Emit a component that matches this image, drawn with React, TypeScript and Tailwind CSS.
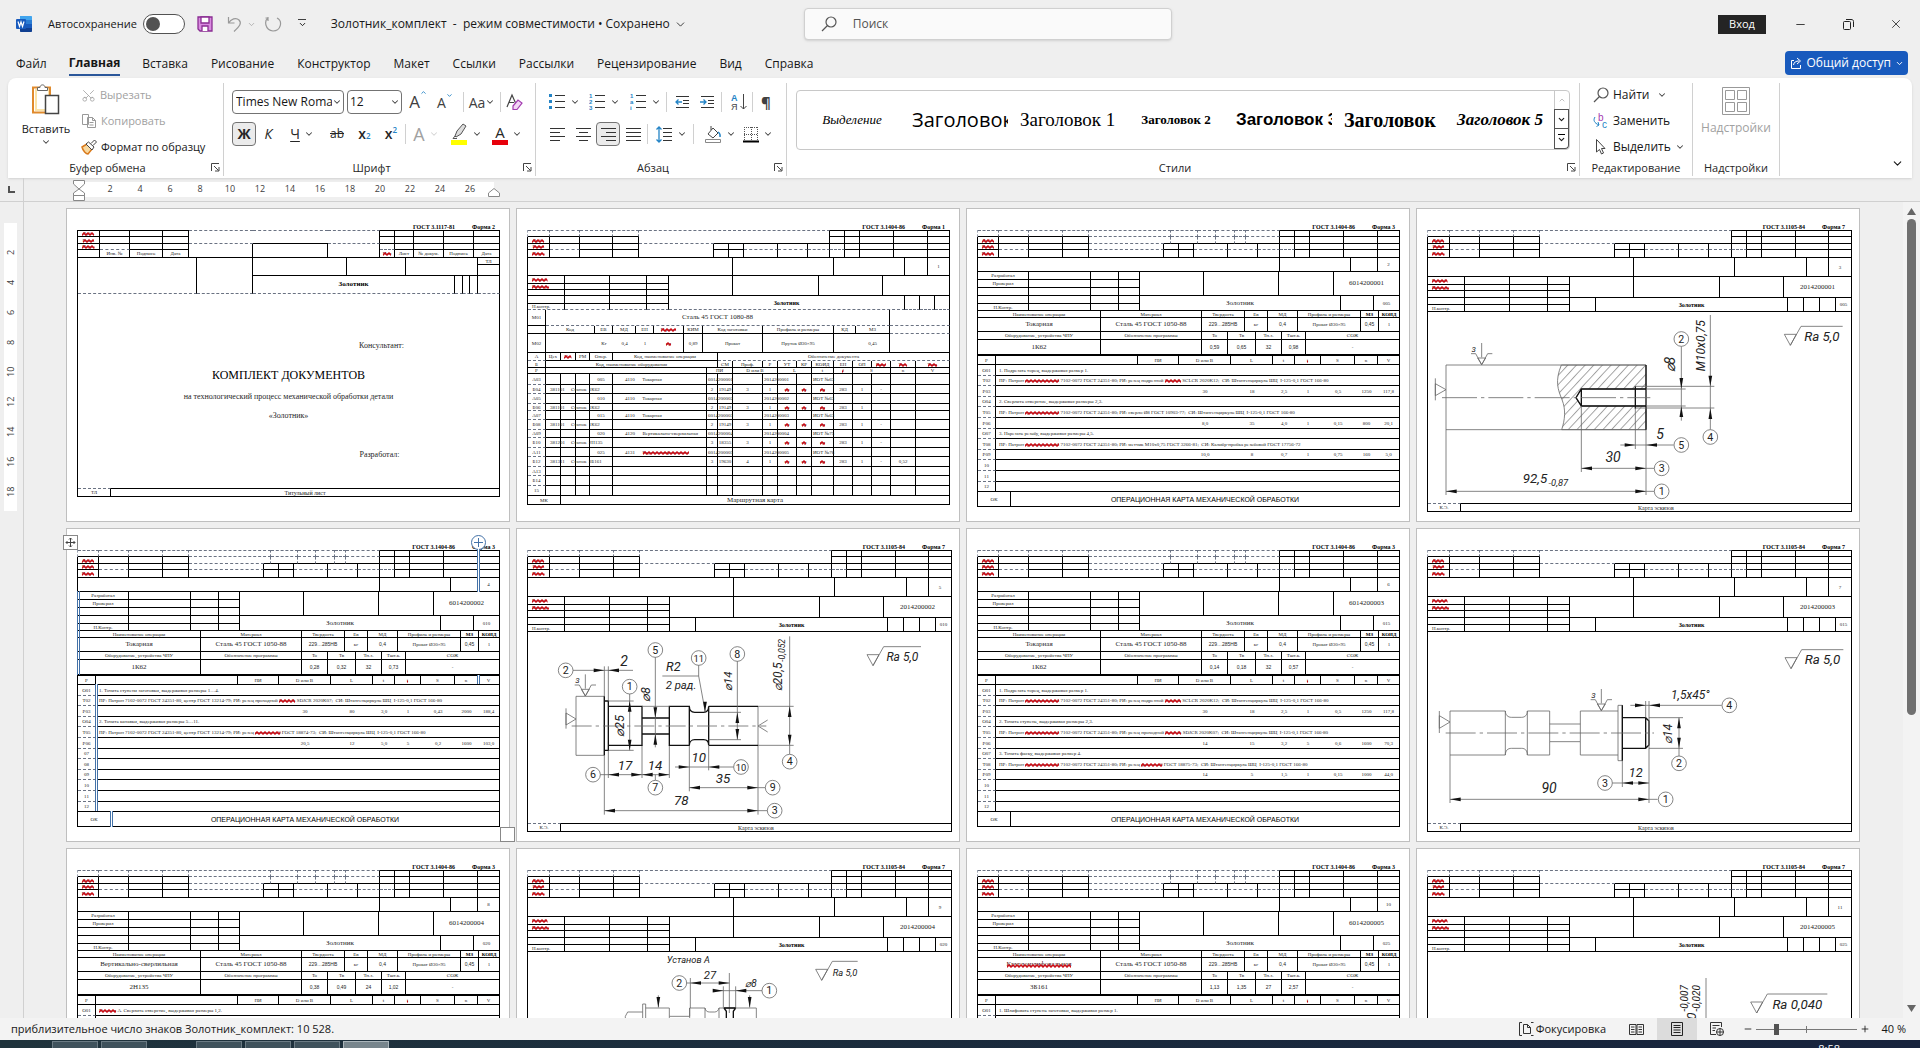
import React from 'react';
import { twMerge } from 'tailwind-merge';
import { ChevronDown, ChevronUp, Scissors, Minus, Plus, X } from 'lucide-react';

/* ---------- document forms ---------- */

interface Cell {
  to: number;
  text?: React.ReactNode;
  cls?: string;
}

interface Row {
  h: number;
  cells: Cell[];
}

const DR = '[border-right-style:dashed] border-r-gray-500';
const DB = '[border-bottom-style:dashed] border-b-gray-500';
const DT = 'border-t [border-top-style:dashed] border-t-gray-500';
const NR = 'border-r-0';
const NB = 'border-b-0';
const LEFT = 'text-left pl-1';
const BIG = 'text-[7px]';
const BOLD = 'font-bold text-black';
const SANS = 'font-[Liberation_Sans,sans-serif]';

const c = (to: number, text?: React.ReactNode, cls?: string): Cell => ({ to, text, cls });
const blank = (edges: number[], cls?: string): Cell[] => edges.map((e) => c(e, undefined, cls));
const row = (h: number, ...cells: Cell[]): Row => ({ h, cells });

// Spelling squiggles share one pattern, which App puts in the page
const Squiggle = () => (
  <svg className="absolute size-0" aria-hidden="true">
    <defs>
      <pattern id="squiggle" width="4" height="4" patternUnits="userSpaceOnUse">
        <path d="M-1 4L2 1L5 4" fill="none" stroke="#cc0a14" strokeWidth="1.500" />
      </pattern>
    </defs>
  </svg>
);

const Red = ({ children }: { children: React.ReactNode }) => (
  <span className="relative inline-block text-red-950">
    {children}
    <svg className="absolute bottom-0 left-0 h-1 w-full" aria-hidden="true"><rect width="100%" height="4" fill="url(#squiggle)" /></svg>
  </span>
);

// Column edges are tab stops measured from the left frame line of the form
const Strip = ({ from = 0, rows }: { from?: number; rows: Row[] }) => {
  const widths = rows[0].cells.map((cell, i) => cell.to - (i ? rows[0].cells[i - 1].to : from));
  const total = widths.reduce((a, b) => a + b, 0);
  return (
    <table className="table-fixed border-separate border-spacing-0 font-[Liberation_Serif,serif] text-[5px] leading-none text-neutral-800" style={{ width: total }}>
      <colgroup>
        {widths.map((w, i) => <col key={i} style={{ width: w }} />)}
      </colgroup>
      <tbody>
        {rows.map((r, i) => (
          <tr key={i} style={{ height: r.h }}>
            {r.cells.map((cell, j) => (
              <td key={j} className={twMerge('border-r border-b border-black p-0 text-center align-middle leading-none whitespace-pre', cell.cls)}>
                {cell.text}
              </td>
            ))}
          </tr>
        ))}
      </tbody>
    </table>
  );
};

const Sheet = ({ gost, form, children }: { gost: string; form: string; children: React.ReactNode }) => (
  <section className="relative h-[314px] w-[444px] shrink-0 border border-[#bfbfbf] bg-white px-[10px]">
    <div className="flex h-[21px] items-end justify-end gap-[17px] pr-1 font-[Liberation_Serif,serif] text-[6px] leading-[6px] font-bold text-black">
      <span>{gost}</span>
      <span>{form}</span>
    </div>
    {children}
  </section>
);

const Frame = ({ children }: { children: React.ReactNode }) => (
  <div className="w-fit border-l border-black">{children}</div>
);

// The stamp on top of every form but the title one
const StampTop = ({ left, mid, right, dashes }: { left: number[]; mid: number[]; right: number[]; dashes?: number[] }) => {
  const [l0, l1, l2, l3] = left;
  return (
    <>
      <div className="w-fit border-l border-dashed border-gray-400">
        <Strip
          rows={[
            row(
              7,
              ...blank(left, `${DT} ${DR}`),
              ...blank(dashes || [], `${DT} ${DR} ${DB}`),
              c(right[0], '', `${DT} ${dashes ? DB : NB}`),
              ...blank(right.slice(1), 'border-t border-t-black'),
            ),
          ]}
        />
      </div>
      <Frame>
        <Strip
          rows={[
            row(
              7,
              c(l0, <Red>Дубл.</Red>), c(l1), c(l2), c(l3),
              c(mid[0], '', `${DB} ${NR}`),
              ...blank(dashes || [], DR),
              c(right[0]),
              ...blank(right.slice(1)),
            ),
          ]}
        />
        <Strip
          rows={[
            row(
              6,
              c(l0, <Red>Взам.</Red>), c(l1, '', DB), c(l2), c(l3),
              c(mid[0], '', dashes ? DB : NB), c(mid[1]), c(mid[2]), c(mid[3], '', DB), c(mid[4], '', DB),
              c(right[0], '', DB), c(right[1], '', DB), ...blank(right.slice(2)),
            ),
            row(8, c(l0, <Red>Подп.</Red>), ...blank([l1, l2, l3, ...mid, ...right])),
          ]}
        />
      </Frame>
    </>
  );
};

const Title = () => {
  const r = [317, 336, 366, 396, 422];
  const top = 'border-t border-t-black';
  return (
    <Sheet gost="ГОСТ 3.1117-81" form="Форма 2">
      <Frame>
        <Strip
          rows={[
            row(7, c(22, <Red>Дубл.</Red>, top), ...blank([52, 85, 111], top), ...blank([175, 250], `${DT} ${NR} ${NB}`), c(302, '', `${DT} ${NB}`), ...blank(r, top)),
            row(7, c(22, <Red>Взам.</Red>), ...blank([52, 85, 111]), c(175, '', `${DB} ${NR}`), c(250, '', NR), c(302, '', DB), ...blank(r)),
            row(6, c(22, <Red>Подп.</Red>), c(52, '', DB), c(85), c(111), ...blank([175, 250, 302], NB), c(317, '', DB), ...blank(r.slice(1))),
            row(8, c(22), c(52, 'Инв. №'), c(85, 'Подпись'), c(111, 'Дата'), c(175), c(250), c(302), c(317, <Red>Изм</Red>), c(336, 'Лист'), c(366, '№ докум.'), c(396, 'Подпись'), c(422, 'Дата')),
          ]}
        />
        <div className="flex">
          <Strip rows={[row(36, c(119, '', DB), c(175, '', DB))]} />
          <div>
            <div className="flex">
              <Strip from={175} rows={[row(18, c(269), c(328), c(400))]} />
              <Strip from={400} rows={[row(7, c(422, 'ТЛ')), row(11, c(422))]} />
            </div>
            <Strip from={175} rows={[row(18, c(377, 'Золотник', `${BOLD} ${BIG} ${DB}`), ...blank([385, 392, 400, 422], DB))]} />
          </div>
        </div>
        <div className="flex h-[194px] flex-col items-center border-r border-black pt-12 font-[Liberation_Serif,serif] text-[8px] leading-none text-neutral-800">
          <p className="pl-[186px]">Консультант:</p>
          <h2 className="mt-[19px] text-[12px] text-black">КОМПЛЕКТ ДОКУМЕНТОВ</h2>
          <p className="mt-3">на технологический процесс механической обработки детали</p>
          <p className="mt-[11px]">«Золотник»</p>
          <p className="mt-[31px] pl-[182px]">Разработал:</p>
        </div>
        <Strip rows={[row(9, c(33, 'ТЛ', DT), c(422, 'Титульный лист', 'border-t border-t-black text-[6px]'))]} />
      </Frame>
    </Sheet>
  );
};

const WIDE_COLS = [18, 33, 48, 62, 85, 179, 190, 205, 235, 250, 269, 284, 306, 325, 344, 363, 388, 422];

const routeA = (h: number, label: string, no: string, code: string, name: React.ReactNode, doc: string, sketch: string, iot: string): Row => {
  const text: Record<number, React.ReactNode> = { 85: no, 179: <>{code}      {name}</>, 190: doc, 250: sketch, 306: iot };
  return row(h, c(18, label, DB), ...WIDE_COLS.slice(1).map((e) => c(e, text[e], e === 179 ? 'text-left pl-3' : e > 179 ? 'text-left pl-px' : '')));
};

const routeB = (h: number, label: string, code: string, machine: string, vals: React.ReactNode[]): Row =>
  row(
    h, c(18, label, DB), c(33, code, LEFT), c(48, machine, 'text-left pl-[10px]'), ...blank([62, 85, 179]),
    ...WIDE_COLS.slice(6).map((e, i) => c(e, vals[i])),
  );

const kr = <Red>кр</Red>;

const RouteCard = () => (
  <Sheet gost="ГОСТ 3.1404-86" form="Форма 1">
    <StampTop left={[22, 52, 85, 111]} mid={[186, 201, 216, 250, 280]} right={[302, 317, 332, 366, 400, 422]} />
    <Frame>
      <Strip rows={[row(18, c(205), c(306), c(377), c(400), c(422, '1'))]} />
      <div className="flex">
        <Strip
          rows={[
            row(8, c(37, <Red>Разраб.</Red>, LEFT), ...blank([82, 119, 141])),
            row(6, c(37, <Red>Провер.</Red>, LEFT), ...blank([82, 119, 141])),
            row(6, ...blank([37, 82, 119, 141])),
            row(8, ...blank([37, 82, 119, 141])),
            row(6, c(37, 'Н.контр.', `${LEFT} ${DB}`), ...blank([82, 119, 141], DB)),
          ]}
        />
        <div>
          <Strip from={141} rows={[row(20, ...blank([205, 291, 355, 422]))]} />
          <Strip from={141} rows={[row(14, c(377, 'Золотник', `${BOLD} text-[6px] ${DB}`), ...blank([392, 407, 422], DB))]} />
        </div>
      </div>
      <Strip rows={[row(16, c(18, 'М01'), c(362, 'Сталь 45 ГОСТ 1080-88', `${BIG} ${DB}`), c(422, '', DB))]} />
      <Strip rows={[row(8, c(18), c(67, 'Код'), c(85, 'ЕВ'), c(108, 'МД'), c(126, 'ЕН'), c(156, <Red>Н.расх.</Red>), c(175, 'КИМ'), c(235, 'Код заготовки'), c(306, 'Профиль и размеры'), c(328, 'КД'), c(362, 'МЗ'), c(422, '', DB))]} />
      <Strip rows={[row(19, c(18, 'М02'), c(67, '', NR), c(85, 'Кг', NR), c(108, '0,4', NR), c(126, '1', NR), c(156, kr), c(175, '0,89'), c(235, 'Прокат'), c(306, 'Пруток Ø30×95'), c(328, '', NR), c(362, '0,45'), c(422))]} />
      <Strip rows={[row(8, c(18, 'А', DB), c(33, 'Цех'), c(48, <Red>Уч.</Red>), c(62, 'РМ'), c(85, 'Опер.'), c(190, 'Код, наименование операции'), c(422, 'Обозначение документа', DB))]} />
      <Strip rows={[row(7, c(18, 'Б'), c(190, 'Код, наименование оборудования'), c(205, 'СМ'), c(235, 'Проф.'), c(250, 'Р'), c(269, 'УТ'), c(284, 'КР'), c(306, 'КОИД'), c(325, 'ЕН'), c(344, 'ОП'), c(363, <Red>Кшт.</Red>), c(388, <Red>Тпз.</Red>), c(422, <Red>Тшт.</Red>))]} />
      <Strip rows={[row(6, c(18, 'Р'), c(179), c(205, 'ПИ'), c(250, 'D или В'), c(284, 'L'), c(306, 't'), c(325, <Red>i</Red>), c(363, 'S'), c(388, 'n'), c(422, 'V'))]} />
      <Strip
        rows={[
          routeA(11, 'А03', '005', '4110', 'Токарная', '6014200001', '2014200001', 'ИОТ №63'),
          routeB(9, 'Б04', '381101', 'Станок  1К62', ['2', '19149', '3', '1', kr, kr, kr, '283', '1', '-', '']),
          routeA(10, 'А05', '010', '4110', 'Токарная', '6014200002', '2014200002', 'ИОТ №63'),
          routeB(7, 'Б06', '381101', 'Станок  1К62', ['2', '19149', '3', '1', kr, kr, kr, '283', '1', '', '']),
          routeA(9, 'А07', '015', '4110', 'Токарная', '6014200003', '2014200003', 'ИОТ №63'),
          routeB(10, 'Б08', '381101', 'Станок  1К62', ['2', '19149', '3', '1', kr, kr, kr, '283', '1', '-', '']),
          routeA(8, 'А09', '020', '4120', 'Вертикально-сверлильная', '6014200004', '2014200004', 'ИОТ №75'),
          routeB(10, 'Б10', '381201', 'Станок  2Н135', ['3', '18355', '3', '1', kr, kr, kr, '283', '1', '-', '']),
          routeA(9, 'А11', '025', '4131', <Red>Круглошлифовальная</Red>, '6014200005', '2014200005', 'ИОТ №76'),
          routeB(10, 'Б12', '381311', 'Станок  3Б161', ['3', '19630', '4', '1', kr, kr, kr, '283', '1', '-', '0,52']),
          row(9, c(18, 'А13', DB), ...blank(WIDE_COLS.slice(1))),
          row(10, c(18, 'Б14', DB), ...blank(WIDE_COLS.slice(1))),
          row(10, c(18, '15'), ...blank(WIDE_COLS.slice(1))),
        ]}
      />
      <Strip rows={[row(9, c(33, 'МК'), c(422, 'Маршрутная карта', BIG))]} />
    </Frame>
  </Sheet>
);

interface Operation {
  page: string;
  code: string;
  no: string;
  name: React.ReactNode;
  machine: string;
  times: string[];
  steps: (React.ReactNode | string[])[];
}

const STEP_HEIGHTS = [11, 10, 11, 10, 11, 11, 10, 11, 10, 11, 11, 10];
const STEP_EDGES = [201, 253, 295, 317, 343, 377, 400, 422];

const OperationCard = ({ op }: { op: Operation }) => {
  const signs = [51, 113, 141, 162];
  const isText = (i: number) => !Array.isArray(op.steps[i]);
  const label = (i: number) => {
    const n = String(i + 1).padStart(2, '0');
    if (i >= op.steps.length) return n;
    return ['О', 'Т', 'Р'][i % 3] + n;
  };
  return (
    <Sheet gost="ГОСТ 3.1404-86" form="Форма 3">
      <StampTop left={[21, 51, 85, 111]} mid={[186, 201, 216, 250, 280]} right={[302, 317, 332, 366, 400, 422]} dashes={[193, 220, 238, 257, 268]} />
      <Frame>
        <Strip rows={[row(14, c(302), c(373), c(400), c(422, op.page))]} />
        <div className="flex">
          <Strip
            rows={[
              row(8, c(51, 'Разработал'), ...blank(signs.slice(1))),
              row(8, c(51, 'Проверил'), ...blank(signs.slice(1))),
              row(8, ...blank(signs)),
              row(8, ...blank(signs)),
              row(7, c(51, 'Н.Контр.'), ...blank(signs.slice(1))),
            ]}
          />
          <div>
            <Strip from={162} rows={[row(24, c(226), c(301), c(356), c(422, op.code, BIG))]} />
            <Strip from={162} rows={[row(15, c(363, 'Золотник', BIG), c(396), c(422, op.no))]} />
          </div>
        </div>
        <Strip
          rows={[
            row(7, c(123, 'Наименование операции'), c(224, 'Материал'), c(267, 'Твердость'), c(290, 'Ев'), c(320, 'МД'), c(383, 'Профиль и размеры'), c(401, 'МЗ', BOLD), c(422, 'КОИД', BOLD)),
            row(14, c(123, op.name, BIG), c(224, 'Сталь 45 ГОСТ 1050-88', BIG), c(267, '229…285НВ', SANS), c(290, 'кг'), c(320, '0,4', SANS), c(383, 'Прокат Ø30×95'), c(401, '0,45', SANS), c(422, '1')),
          ]}
        />
        <Strip
          rows={[
            row(8, c(123, 'Оборудование, устройства ЧПУ'), c(224, 'Обозначение программы'), c(250, 'То'), c(278, 'Тв'), c(304, 'Тп.з.'), c(328, 'Тшт.к.'), c(422, 'СОЖ')),
            row(15, c(123, op.machine, BIG), c(224), ...[250, 278, 304, 328].map((e, i) => c(e, op.times[i], SANS)), c(422, '-')),
          ]}
        />
        <Strip rows={[row(10, c(18, 'Р', 'border-t border-t-black'), ...['', 'ПИ', 'D или В', 'L', 't', <Red>i</Red>, 'S', 'n', 'V'].map((t, i) => c([160, ...STEP_EDGES][i], t, 'border-t border-t-black')))]} />
        {STEP_HEIGHTS.map((h, i) => (
          <Strip
            key={i}
            rows={[
              isText(i)
                ? row(h, c(18, label(i), i < 11 ? DB : ''), c(422, op.steps[i] as React.ReactNode, 'text-left pl-[3px]'))
                : row(h, c(18, label(i), DB), c(160, '', NR), ...STEP_EDGES.map((e, j) => c(e, (op.steps[i] as string[])[j - 1], j < 7 ? NR : ''))),
            ]}
          />
        ))}
        <Strip rows={[row(15, c(33, 'ОК'), c(422, 'ОПЕРАЦИОННАЯ КАРТА МЕХАНИЧЕСКОЙ ОБРАБОТКИ', 'font-[Liberation_Sans,sans-serif] text-[7px] text-black'))]} />
      </Frame>
    </Sheet>
  );
};

const SketchCard = ({ page, code, no, children }: { page: string; code: string; no: string; children: React.ReactNode }) => {
  const signs = [82, 120, 142];
  return (
    <Sheet gost="ГОСТ 3.1105-84" form="Форма 7">
      <StampTop left={[22, 52, 86, 112]} mid={[187, 202, 217, 251, 281]} right={[304, 319, 334, 368, 401, 424]} />
      <Frame>
        <Strip rows={[row(19, c(206), c(307), c(379), c(401), c(424, page))]} />
        <div className="flex">
          <Strip
            rows={[
              row(8, c(37, <Red>Разраб.</Red>, LEFT), ...blank(signs)),
              row(6, c(37, <Red>Провер.</Red>, LEFT), ...blank(signs)),
              row(7, c(37), ...blank(signs)),
              row(7, c(37), ...blank(signs)),
              row(7, c(37, 'Н.контр.', LEFT), ...blank(signs)),
            ]}
          />
          <div>
            <Strip from={142} rows={[row(21, c(206), c(292), c(356), c(424, code, BIG))]} />
            <Strip from={142} rows={[row(14, c(168), c(360, 'Золотник', `${BOLD} text-[6px]`), c(376), c(392), c(408), c(424, no))]} />
          </div>
        </div>
        <div className="border-r border-black">
          <svg className="block h-[191px] w-[423px]" viewBox="55 337 1269 573" fill="none" stroke="#666" strokeWidth="2.4">
            {children}
          </svg>
        </div>
        <Strip rows={[row(9, c(33, 'К.Э.', DT), c(424, 'Карта эскизов', 'border-t border-t-black text-[6px]'))]} />
      </Frame>
    </Sheet>
  );
};

/* ---------- sketches, three units per pixel ---------- */

const TURN = { r: 0, d: 90, l: 180, u: 270 };

const Arrow = ({ x, y, d }: { x: number; y: number; d: keyof typeof TURN }) => (
  <path d="M0 0L-32 -5.5V5.5Z" fill="#111" stroke="none" transform={`translate(${x} ${y}) rotate(${TURN[d]})`} />
);

const Mark = ({ x, y, n }: { x: number; y: number; n: number }) => (
  <>
    <circle cx={x} cy={y} r="22" fill="#fff" />
    <Label x={x} y={y + 11} size={n > 9 ? 28 : 32} upright>{n}</Label>
  </>
);

interface LabelProps {
  x: number;
  y: number;
  size?: number;
  turn?: number;
  upright?: boolean;
  children: React.ReactNode;
}

const Label = ({ x, y, size = 42, turn = 0, upright, children }: LabelProps) => (
  <text
    className={upright ? 'font-[Roboto,sans-serif]' : 'font-[Roboto,sans-serif] italic'}
    transform={`translate(${x} ${y}) rotate(${turn})`}
    fontSize={size}
    textAnchor="middle"
    fill="#222"
    stroke="none"
  >
    {children}
  </text>
);

const Roughness = ({ x, y, text, w = 125, size = 40 }: { x: number; y: number; text: string; w?: number; size?: number }) => (
  <>
    <path d={`M${x} ${y - 33}H${x + 36}L${x + 18} ${y}ZM${x + 18} ${y}L${x + 50} ${y - 57}H${x + 50 + w}`} />
    <Label x={x + 50 + w / 2} y={y - 13} size={size}>{text}</Label>
  </>
);

// Chuck grip: a triangle with wings and the jaw count over it
const Grip = ({ x, y }: { x: number; y: number }) => (
  <>
    <path d={`M${x} ${y}L${x - 12} ${y - 20}H${x + 12}ZL${x + 18} ${y - 33}H${x + 32}M${x} ${y}L${x - 18} ${y - 33}H${x - 32}M${x} ${y - 65}V${y - 22}`} />
    <Label x={x - 24} y={y - 38} size={24}>3</Label>
  </>
);

const Sketch1 = () => (
  <>
    <defs>
      <pattern id="hatch" width="19" height="19" patternUnits="userSpaceOnUse" patternTransform="rotate(43)">
        <path d="M1.500 0V19" stroke="#777" strokeWidth="2" />
      </pattern>
    </defs>
    <path d="M455 496C435 545 445 570 457 600S466 660 456 690H709V619H515L499 594L515 568H709V496Z" fill="url(#hatch)" />
    <path d="M109 496H709M109 690H709M109 496V886M709 690V886" />
    <path d="M709 496V690M709 568H515L499 594L515 619H709M515 568V619M677 560V627" stroke="#111" strokeWidth="4" />
    <path d="M97 594H722" strokeDasharray="105 12 10 12" />
    <path d="M677 560H914M677 625H914M709 568H828M709 619H828" />
    <path d="M815 440V663M902 346V690M677 627V748M515 619V817" />
    <path d="M632 736H792M515 806H734M109 875H734" />
    <Arrow x={815} y={567} d="d" /><Arrow x={815} y={620} d="u" />
    <Arrow x={902} y={560} d="d" /><Arrow x={902} y={626} d="u" />
    <Arrow x={677} y={736} d="r" /><Arrow x={710} y={736} d="l" />
    <Arrow x={515} y={806} d="l" /><Arrow x={709} y={806} d="r" />
    <Arrow x={109} y={875} d="l" /><Arrow x={709} y={875} d="r" />
    <path d="M109 570L77 552V588ZM77 536V602" />
    <Grip x={216} y={495} />
    <Mark x={815} y={418} n={2} /><Mark x={902} y={712} n={4} /><Mark x={815} y={736} n={5} />
    <Mark x={756} y={806} n={3} /><Mark x={756} y={875} n={1} />
    <Label x={751} y={718}>5</Label>
    <Label x={610} y={788}>30</Label>
    <Label x={376} y={849} size={40}>92,5</Label>
    <Label x={446} y={860} size={28}>-0,87</Label>
    <Label x={796} y={495} turn={-90}>⌀8</Label>
    <Label x={886} y={438} turn={-90} size={36}>M10x0,75</Label>
    <Roughness x={1124} y={437} text="Ra 5,0" />
  </>
);

const Sketch2 = () => (
  <>
    <path d="M199 530H284V707H199ZM284 707V885M745 560V885M397 677V775M479 677V775M296 692V775" />
    <path d="M284 530V707M284 544H296V692H284M296 560H397V677H296M397 595H479M397 643H479M479 677V560H539V677ZM539 560C539 574 545 578 555 578H582C592 578 597 570 597 560V677C597 666 592 660 582 660H555C545 660 539 668 539 677M597 560H745M597 677H745" stroke="#111" strokeWidth="4" />
    <path d="M186 619H770" strokeDasharray="60 12 10 12" />
    <path d="M397 560H479M745 560H852M745 677H852M296 544H372M296 692H372M597 578H694M597 660H694M539 677V815M597 677V752" />
    <path d="M190 452H370M284 440V530M296 440V544M360 522V692M437 412V683M567 436V469L587 578M458 469H567M683 424V660M840 350V704" />
    <path d="M270 765H479M437 765V782M496 742H672M539 804H767M284 873H774" />
    <Arrow x={284} y={452} d="r" /><Arrow x={296} y={452} d="l" />
    <Arrow x={360} y={544} d="u" /><Arrow x={360} y={692} d="d" />
    <Arrow x={437} y={595} d="d" /><Arrow x={437} y={643} d="u" />
    <Arrow x={683} y={578} d="u" /><Arrow x={683} y={660} d="d" />
    <Arrow x={840} y={560} d="u" /><Arrow x={840} y={677} d="d" />
    <Arrow x={296} y={765} d="l" /><Arrow x={397} y={765} d="r" /><Arrow x={397} y={765} d="l" /><Arrow x={479} y={765} d="r" />
    <Arrow x={539} y={742} d="r" /><Arrow x={597} y={742} d="l" />
    <Arrow x={539} y={804} d="l" /><Arrow x={745} y={804} d="r" />
    <Arrow x={284} y={873} d="l" /><Arrow x={745} y={873} d="r" />
    <Arrow x={586} y={578} d="d" />
    <path d="M199 598L169 580V616ZM169 566V627M774 601L745 619L774 637" />
    <Grip x={227} y={529} />
    <Mark x={168} y={452} n={2} /><Mark x={360} y={501} n={1} /><Mark x={437} y={391} n={5} /><Mark x={567} y={415} n={11} />
    <Mark x={683} y={403} n={8} /><Mark x={840} y={726} n={4} /><Mark x={250} y={765} n={6} /><Mark x={437} y={804} n={7} />
    <Mark x={694} y={742} n={10} /><Mark x={789} y={804} n={9} /><Mark x={795} y={873} n={3} />
    <Label x={343} y={438}>2</Label>
    <Label x={491} y={454} size={38}>R2</Label>
    <Label x={514} y={508} size={34}>2 рад.</Label>
    <Label x={346} y={750} size={40}>17</Label>
    <Label x={436} y={750} size={40}>14</Label>
    <Label x={567} y={726} size={40}>10</Label>
    <Label x={640} y={789} size={40}>35</Label>
    <Label x={515} y={857} size={40}>78</Label>
    <Label x={344} y={619} turn={-90} size={38}>⌀25</Label>
    <Label x={421} y={525} turn={-90} size={38}>⌀8</Label>
    <Label x={667} y={485} turn={-90} size={34}>⌀14</Label>
    <Label x={818} y={472} turn={-90} size={36}>⌀20,5</Label>
    <Label x={826} y={392} turn={-90} size={26}>-0,052</Label>
    <Roughness x={1072} y={438} text="Ra 5,0" w={112} size={36} />
  </>
);

const Sketch3 = () => (
  <>
    <path d="M121 574H287C287 586 295 593 305 593H336C346 593 353 586 353 574H420V613H512V574H625M121 574V850M121 706H287C287 692 295 686 305 686H336C346 686 353 692 353 706H420V666H512V706H625M287 574V706M353 574V706M420 613V666M512 613V666M625 557H638V723H625Z" />
    <path d="M638 557V723M638 594H708L718 604V676L708 686H638M708 594V686" stroke="#111" strokeWidth="4" />
    <path d="M108 640H733" strokeDasharray="90 12 10 12" />
    <path d="M718 604V850M638 723V802M708 544V594M718 544V604M662 557H936M718 594H820M718 686H820M808 594V709M608 790H718M121 839H744" />
    <Arrow x={708} y={557} d="r" /><Arrow x={719} y={557} d="l" />
    <Arrow x={808} y={594} d="u" /><Arrow x={808} y={686} d="d" />
    <Arrow x={638} y={790} d="l" /><Arrow x={718} y={790} d="r" />
    <Arrow x={121} y={839} d="l" /><Arrow x={718} y={839} d="r" />
    <path d="M121 607L89 588V626ZM89 574V640" />
    <Grip x={575} y={573} />
    <Mark x={959} y={557} n={4} /><Mark x={808} y={731} n={2} /><Mark x={586} y={790} n={3} /><Mark x={768} y={839} n={1} />
    <Label x={842} y={538} size={36}>1,5x45°</Label>
    <Label x={418} y={820}>90</Label>
    <Label x={678} y={773} size={38}>12</Label>
    <Label x={788} y={643} turn={-90} size={36}>⌀14</Label>
    <Roughness x={1126} y={447} text="Ra 5,0" />
  </>
);

const Sketch4 = () => (
  <>
    <path d="M347 640V530L354 517H399M399 600V493H408V600M408 505H479V530H540V505H586C588 514 592 517 600 517H615C622 517 626 512 628 505H643M479 530V600M540 505V600M586 505V600M628 505V600M643 505H740V600M446 467V503M720 467V503M542 415V505M659 400V520M641 440V505M678 440V505" />
    <path d="M643 505L650 515V600M678 505L671 515V600M643 505H678" stroke="#111" strokeWidth="4" />
    <Arrow x={446} y={504} d="d" /><Arrow x={720} y={504} d="d" />
    <path d="M530 430H659M610 453H759" />
    <Arrow x={542} y={430} d="l" /><Arrow x={659} y={430} d="r" />
    <Arrow x={641} y={453} d="r" /><Arrow x={678} y={453} d="l" />
    <Mark x={509} y={430} n={2} /><Mark x={779} y={453} n={1} />
    <Label x={536} y={370} size={28}>Установ А</Label>
    <Label x={601} y={418} size={34}>27</Label>
    <Label x={724} y={442} size={30}>⌀8</Label>
    <Roughness x={918} y={422} text="Ra 5,0" w={76} size={28} />
  </>
);

const Sketch5 = () => (
  <>
    <path d="M889 415V910" />
    <Label x={836} y={476} turn={-90} size={30}>-0,007</Label>
    <Label x={872} y={476} turn={-90} size={30}>-0,020</Label>
    <Label x={858} y={552} turn={-90} size={40}>⌀20</Label>
    <Roughness x={1023} y={520} text="Ra 0,040" w={180} />
  </>
);

const cup = <>ПР: Патрон <Red>трехкулачковый</Red> 7102-0072 ГОСТ 24351-80; РИ: </>;
const shc = 'СИ: Штангенциркуль ШЦ  I-125-0,1 ГОСТ 166-80';

const operations: Operation[] = [
  {
    page: '2', code: '6014200001', no: '005', name: 'Токарная', machine: '1К62', times: ['0,59', '0,65', '32', '0,98'],
    steps: [
      '1. Подрезать торец, выдерживая размер 1.',
      <>{cup}резец подрезной <Red>Sandvik</Red> SCLCR 2020K12;  {shc}</>,
      ['30', '18', '2,5', '1', '0,5', '1250', '117,8'],
      '2. Сверлить отверстие, выдерживая размеры 2,3.',
      <>{cup}сверло Ø8 ГОСТ 10903-77;  {shc}</>,
      ['8,0', '35', '4,0', '1', '0,15', '800', '20,1'],
      '3. Нарезать резьбу, выдерживая размеры 4,5.',
      <>{cup}метчик М10x0,75 ГОСТ 3266-81;  СИ: Калибр-пробка резьбовой ГОСТ 17756-72</>,
      ['10,0', '8', '0,7', '1', '0,75', '160', '5,0'],
    ],
  },
  {
    page: '4', code: '6014200002', no: '010', name: 'Токарная', machine: '1К62', times: ['0,28', '0,32', '32', '0,73'],
    steps: [
      '1. Точить ступени заготовки, выдерживая размеры 1…4.',
      <>ПР: Патрон 7102-0072 ГОСТ 24351-80, центр ГОСТ 13214-79; РИ: резец проходной <Red>Sandvik</Red> SDJCR 2020K07;  {shc}</>,
      ['30', '80', '3,0', '1', '0,43', '2000', '188,4'],
      '2. Точить канавки, выдерживая размеры 5…11.',
      <>ПР: Патрон 7102-0072 ГОСТ 24351-80, центр ГОСТ 13214-79; РИ: резец <Red>канавочный</Red> ГОСТ 18874-73;  {shc}</>,
      ['20,5', '12', '5,0', '5', '0,2', '1600', '103,0'],
    ],
  },
  {
    page: '6', code: '6014200003', no: '015', name: 'Токарная', machine: '1К62', times: ['0,14', '0,18', '32', '0,57'],
    steps: [
      '1. Подрезать торец, выдерживая размер 1.',
      <>{cup}резец подрезной <Red>Sandvik</Red> SCLCR 2020K12;  {shc}</>,
      ['30', '18', '2,5', '1', '0,5', '1250', '117,8'],
      '2. Точить ступень, выдерживая размеры 2,3.',
      <>{cup}резец проходной <Red>Sandvik</Red> SDJCR 2020K07;  {shc}</>,
      ['14', '15', '3,2', '5', '0,6', '1600', '70,3'],
      '3. Точить фаску, выдерживая размер 4.',
      <>{cup}резец <Red>фасочный</Red> ГОСТ 18875-73;  {shc}</>,
      ['14', '5', '1,5', '1', '0,15', '1000', '44,0'],
    ],
  },
  {
    page: '8', code: '6014200004', no: '020', name: 'Вертикально-сверлильная', machine: '2Н135', times: ['0,38', '0,49', '24', '1,02'],
    steps: [<><Red>Установ</Red> А. Сверлить отверстие, выдерживая размеры 1,2.</>, cup, ['8,0', '35', '4,0', '1', '0,15', '800', '20,1']],
  },
  {
    page: '10', code: '6014200005', no: '025', name: <Red>Круглошлифовальная</Red>, machine: '3Б161', times: ['1,13', '1,35', '27', '2,57'],
    steps: ['1. Шлифовать ступень заготовки, выдерживая размер 1.', cup, ['20', '80', '0,1', '1', '0,15', '800', '20,1']],
  },
];

const TableHandles = () => (
  <svg className="pointer-events-none absolute top-0 -left-[3px] h-[314px] w-[453px]" viewBox="63 528 453 314" fill="none">
    <g fill="#fff" stroke="#4472a8">
      <path d="M77.500 591V675M79.500 591V675M95.500 684V811M97.500 684V811M110.500 811V827M112.500 811V827M477.500 548V592M479.500 548V592M477.500 675V684M479.500 675V684" />
      <circle cx="478.500" cy="542.500" r="7" />
      <path d="M474 542.500H483M478.500 538V547" />
    </g>
    <path d="M478.500 549V592M478.500 675V684M96.500 684V811M111.500 811V827" stroke="#fff" />
    <rect x="63.500" y="535.500" width="14" height="14" fill="#fff" stroke="#888" />
    <path d="M66 542.500H75M70.500 538V547M67.500 541L66 542.500L67.500 544M73.500 541L75 542.500L73.500 544M69 539.500L70.500 538L72 539.500M69 545.500L70.500 547L72 545.500" stroke="#444" />
    <rect x="500.500" y="827.500" width="14" height="14" fill="#fff" stroke="#888" />
  </svg>
);

/* ---------- ribbon ---------- */

const Caret = ({ dim }: { dim?: boolean }) => (
  <ChevronDown size={10} strokeWidth={2.5} className={dim ? 'shrink-0 text-neutral-300' : 'shrink-0 text-neutral-700'} />
);

const Launcher = () => (
  <button aria-label="Параметры" className="absolute right-[3px] bottom-1">
    <svg width="9" height="9" viewBox="0 0 9 9" fill="none" stroke="#444">
      <path d="M0.500 8V0.500H8M3 3L7.500 7.500M8 4V8H4" />
    </svg>
  </button>
);

interface GroupProps {
  title: string;
  className: string;
  launcher?: boolean;
  children: React.ReactNode;
}

const Group = ({ title, className, launcher, children }: GroupProps) => (
  <section className={twMerge('relative mt-[5px] mb-[2px] flex flex-col border-r border-[#d0d0d0]', className)}>
    <div className="flex-1">{children}</div>
    <h3 className={twMerge('h-4 text-center text-[11px] leading-4 text-neutral-800', launcher && 'pr-4')}>{title}</h3>
    {launcher && <Launcher />}
  </section>
);

const Tool = ({ label, on, className, children }: { label: string; on?: boolean; className?: string; children: React.ReactNode }) => (
  <button
    aria-label={label}
    className={twMerge('flex h-6 shrink-0 items-center justify-center', on && 'rounded-sm border border-neutral-500 bg-[#ebebeb]', className)}
  >
    {children}
  </button>
);

const Lines = ({ ends }: { ends: [number, number][] }) => (
  <svg width="15" height="15" viewBox="0 0 15 15" stroke="#333" strokeWidth="1">
    {ends.map(([a, b], i) => <path key={i} d={`M${a} ${i * 4 + 1.5}H${b}`} />)}
  </svg>
);

const ListIcon = ({ marks }: { marks: string[] }) => (
  <svg width="17" height="20" viewBox="0 -2 17 20" stroke="#333">
    {marks.map((m, i) => (
      <React.Fragment key={i}>
        {m === '•'
          ? <rect x="0" y={i * 6} width="3" height="3" fill="#2484c6" stroke="none" />
          : <text x="0" y={i * 6 + 4} fontSize="6" fill="#2484c6" stroke="none" className="font-[Liberation_Sans,sans-serif] font-bold">{m}</text>}
        <path d={`M6 ${i * 6 + 1.5}H16`} />
      </React.Fragment>
    ))}
  </svg>
);

const IndentIcon = ({ out }: { out?: boolean }) => (
  <svg width="15" height="14" viewBox="0 0 15 14" fill="none" stroke="#333">
    <path d="M1 1.500H14M8 5.500H14M8 8.500H14M1 12.500H14" />
    <path stroke="#2484c6" strokeWidth="1.300" d={out ? 'M7 7H1M3.500 4.500L1 7L3.500 9.500' : 'M0 7H6M3.500 4.500L6 7L3.500 9.500'} />
  </svg>
);

const Clipboard = () => (
  <Group title="Буфер обмена" className="w-[216px]" launcher>
    <div className="flex gap-2 pl-[11px]">
      <button className="flex w-[54px] flex-col items-center text-[11px] leading-4">
        <svg width="30" height="32" viewBox="0 0 30 32" fill="none">
          <path d="M4 4.500H21V29.500H4Z" transform="translate(-2 0)" fill="#fff" stroke="#e08a2c" strokeWidth="2" />
          <path d="M4 6V28H18V6Z" fill="#fbe3a8" />
          <path d="M6 8H17V26H6Z" fill="#fff" />
          <path d="M6.500 7.500V4.500H9C9 1 14 1 14 4.500H16.500V7.500Z" fill="#fff" stroke="#666" />
          <path d="M14.500 12.500H27.500V30.500H14.500Z" fill="#fff" stroke="#444" strokeWidth="1.500" />
        </svg>
        <span className="mt-[6px]">Вставить</span>
        <Caret />
      </button>
      <div className="flex flex-col items-start text-[11px]">
        <button disabled className="flex h-6 items-center gap-1 text-neutral-400"><Scissors size={15} strokeWidth={1.300} className="-rotate-90" />Вырезать</button>
        <button disabled className="flex h-7 items-center gap-1 text-neutral-400">
          <svg width="16" height="16" viewBox="0 0 16 16" fill="#fff" stroke="#999"><path d="M1.500 1.500H7.500V11.500H1.500ZM6.500 4.500H11.500L14.500 7.500V14.500H6.500ZM11.500 4.500V7.500H14.500M8.500 9.500H12.500M8.500 12H12.500" /></svg>
          Копировать
        </button>
        <button className="flex h-6 items-center gap-1">
          <svg width="16" height="16" viewBox="0 0 16 16" fill="none">
            <path d="M1 8L6 5L11 10L7 15C5 15 2 12 1 8Z" fill="#f8d9a0" stroke="#d97a1c" strokeWidth="1.500" />
            <path d="M5 5L7.500 3L13 8L11 11ZM10 4.500L13.500 1L15.500 3L12 6.500" fill="#fff" stroke="#444" />
          </svg>
          Формат по образцу
        </button>
      </div>
    </div>
  </Group>
);

const GlyphA = ({ size, children }: { size: string; children?: React.ReactNode }) => (
  <span className={twMerge('flex items-start font-[Open_Sans,sans-serif] leading-none text-neutral-700', size)}>А{children}</span>
);

const Sep = ({ tight }: { tight?: boolean }) => <span className={twMerge('mx-1 h-5 w-px shrink-0 bg-[#d0d0d0]', tight && 'mx-px')} />;

const FontGroup = () => (
  <Group title="Шрифт" className="w-[312px]" launcher>
    <div className="mt-[7px] flex items-center gap-[3px] pl-2">
      <label className="flex h-6 w-[112px] shrink-0 items-center rounded-sm border border-neutral-500 bg-white pr-px pl-[3px]">
        <select aria-label="Шрифт" className="w-0 flex-1 appearance-none overflow-hidden text-[12px] text-clip outline-none"><option>Times New Roman</option></select>
        <Caret />
      </label>
      <label className="flex h-6 w-[55px] shrink-0 items-center rounded-sm border border-neutral-500 bg-white pr-px pl-[2px]">
        <select aria-label="Размер" className="w-0 flex-1 appearance-none text-[12px] outline-none"><option>12</option></select>
        <Caret />
      </label>
      <Tool label="Увеличить размер" className="ml-[3px] w-5"><GlyphA size="text-[17px]"><ChevronUp size={7} strokeWidth={3} className="text-[#2484c6]" /></GlyphA></Tool>
      <Tool label="Уменьшить размер" className="w-7"><GlyphA size="text-[14px]"><ChevronDown size={7} strokeWidth={3} className="text-[#2484c6]" /></GlyphA></Tool>
      <Sep tight />
      <Tool label="Регистр" className="w-7 text-[14px] text-neutral-700">Aa<Caret /></Tool>
      <Sep tight />
      <Tool label="Очистить формат" className="w-5">
        <svg width="18" height="18" viewBox="0 0 18 18" fill="none" stroke="#444" strokeWidth="1.200">
          <path d="M1 14L6 2L10 11M3 9.500H8" />
          <path d="M7 13L12 7L16 10L11 16.500L7 16.500Z" fill="#f3d6f5" stroke="#a33bb0" />
        </svg>
      </Tool>
    </div>
    <div className="mt-2 flex items-center pl-2 text-[14px] leading-none text-neutral-800">
      <Tool label="Полужирный" on className="w-6 font-bold">Ж</Tool>
      <Tool label="Курсив" className="w-[25px] italic">К</Tool>
      <Tool label="Подчеркнутый" className="w-[42px] gap-1"><span className="underline underline-offset-2">Ч</span><Caret /></Tool>
      <Tool label="Зачеркнутый" className="w-[28px] text-[12px] line-through">ab</Tool>
      <Tool label="Подстрочный" className="w-[27px] font-semibold">x<sub className="text-[8px] text-[#2484c6]">2</sub></Tool>
      <Tool label="Надстрочный" className="w-[26px] font-semibold">x<sup className="text-[8px] text-[#2484c6]">2</sup></Tool>
      <Sep tight />
      <Tool label="Эффекты" className="ml-1 w-[30px] gap-1 text-[18px] text-neutral-400">A<Caret dim /></Tool>
      <Tool label="Выделение цветом" className="ml-2 w-[34px] gap-1">
        <svg width="17" height="22" viewBox="0 0 17 22" fill="none">
          <path d="M4 13L6 8L12 1L15 3L10 11L5 14Z" fill="#ddd" stroke="#555" />
          <path d="M4 13L2 15.500H6" stroke="#555" />
          <rect y="17" width="16" height="5" fill="#ff0" />
        </svg>
        <Caret />
      </Tool>
      <Tool label="Цвет текста" className="ml-2 w-[32px] gap-1">
        <span className="flex w-4 flex-col items-center text-[15px] leading-4"><span>A</span><span className="h-[5px] w-4 bg-red-600" /></span>
        <Caret />
      </Tool>
    </div>
  </Group>
);

const Paragraph = () => (
  <Group title="Абзац" className="w-[251px]" launcher>
    <div className="mt-[7px] flex items-center pl-2">
      <Tool label="Маркеры" className="w-10 gap-1"><ListIcon marks={['•', '•', '•']} /><Caret /></Tool>
      <Tool label="Нумерация" className="w-[41px] gap-1"><ListIcon marks={['1', '2', '3']} /><Caret /></Tool>
      <Tool label="Многоуровневый список" className="w-10 gap-1"><ListIcon marks={['1', ' a', '  i']} /><Caret /></Tool>
      <Sep tight />
      <Tool label="Уменьшить отступ" className="ml-px w-[26px]"><IndentIcon out /></Tool>
      <Tool label="Увеличить отступ" className="w-[25px]"><IndentIcon /></Tool>
      <Sep tight />
      <Tool label="Сортировка" className="ml-1 w-6">
        <svg width="17" height="18" viewBox="0 0 17 18" fill="none" stroke="#444">
          <text x="0" y="8" fontSize="9" fill="#2484c6" stroke="none" className="font-[Liberation_Sans,sans-serif] font-bold">А</text>
          <text x="0" y="17" fontSize="9" fill="#444" stroke="none" className="font-[Liberation_Sans,sans-serif]">Я</text>
          <path d="M12.500 1V16M9.500 13L12.500 16L15.500 13" />
        </svg>
      </Tool>
      <Sep tight />
      <Tool label="Знаки" className="w-6 text-[15px] font-bold text-neutral-700">¶</Tool>
    </div>
    <div className="mt-2 flex items-center pl-2">
      <Tool label="По левому краю" className="w-[26px]"><Lines ends={[[0, 15], [0, 10], [0, 15], [0, 10]]} /></Tool>
      <Tool label="По центру" className="w-[26px]"><Lines ends={[[0, 15], [3, 12], [0, 15], [3, 12]]} /></Tool>
      <Tool label="По правому краю" on className="w-6"><Lines ends={[[0, 15], [5, 15], [0, 15], [5, 15]]} /></Tool>
      <Tool label="По ширине" className="w-[26px]"><Lines ends={[[0, 15], [0, 15], [0, 15], [0, 15]]} /></Tool>
      <Sep tight />
      <Tool label="Интервал" className="ml-1 w-9 gap-1">
        <svg width="17" height="17" viewBox="0 0 17 17" fill="none" stroke="#333">
          <path d="M7 2.500H16M7 6.500H16M7 10.500H16M7 14.500H16" />
          <path stroke="#2484c6" strokeWidth="1.300" d="M3 1V16M0.500 3.500L3 1L5.500 3.500M0.500 13.500L3 16L5.500 13.500" />
        </svg>
        <Caret />
      </Tool>
      <Sep />
      <Tool label="Заливка" className="ml-1 w-9 gap-1">
        <svg width="17" height="18" viewBox="0 0 17 18" fill="none" stroke="#444">
          <path d="M3 9L8 3L13 8L8 13ZM6 5V1" />
          <path d="M13 7C16 9 15 11 15 12" stroke="#2484c6" strokeWidth="1.500" />
          <path d="M0.500 14.500H15.500V17.500H0.500Z" stroke="#888" />
        </svg>
        <Caret />
      </Tool>
      <Tool label="Границы" className="w-10 gap-1">
        <svg width="16" height="17" viewBox="0 0 16 17" stroke="#555" strokeDasharray="1 1">
          <path d="M1 1.500H15M1 8.500H15M1.500 1V15M8.500 1V15M14.500 1V15" />
          <path d="M0 15.500H16" stroke="#000" strokeWidth="2" strokeDasharray="none" />
        </svg>
        <Caret />
      </Tool>
    </div>
  </Group>
);

const styles = [
  { name: 'Выделение', cls: 'font-[Liberation_Serif,serif] text-[13px] italic' },
  { name: 'Заголовок', cls: 'justify-start font-[Open_Sans,sans-serif] text-[20px]' },
  { name: 'Заголовок 1', cls: 'justify-start font-[Liberation_Serif,serif] text-[19px]' },
  { name: 'Заголовок 2', cls: 'font-[Liberation_Serif,serif] text-[13px] font-bold' },
  { name: 'Заголовок 3', cls: 'justify-start font-[Liberation_Sans,sans-serif] text-[17px] font-bold' },
  { name: 'Заголовок 4', cls: 'justify-start font-[Liberation_Serif,serif] text-[20px] font-bold' },
  { name: 'Заголовок 5', cls: 'font-[Liberation_Serif,serif] text-[17px] font-bold italic' },
];

const Styles = () => (
  <Group title="Стили" className="min-w-0 flex-1" launcher>
    <div className="mt-[7px] mr-[9px] ml-[9px] flex h-[60px] rounded border border-[#c8c8c8]">
      <div className="flex min-w-0 flex-1 items-center overflow-hidden pl-px">
        {styles.map((s) => (
          <button key={s.name} className="w-[108px] shrink-0 px-[6px]">
            <span className={twMerge('flex h-7 items-center justify-center overflow-hidden leading-7 whitespace-nowrap text-black', s.cls)}>{s.name}</span>
          </button>
        ))}
      </div>
      <div className="flex w-[15px] flex-col">
        <button aria-label="Вверх" className="flex flex-1 items-center justify-center border-l border-[#c8c8c8]"><ChevronUp size={8} className="text-neutral-400" /></button>
        <button aria-label="Вниз" className="flex h-5 items-center justify-center border border-neutral-600"><ChevronDown size={9} strokeWidth={3} /></button>
        <button aria-label="Все стили" className="flex h-5 flex-col items-center justify-center rounded-br border border-t-0 border-neutral-600">
          <span className="h-px w-[7px] bg-black" /><ChevronDown size={9} strokeWidth={3} />
        </button>
      </div>
    </div>
  </Group>
);

const Lens = () => (
  <svg width="16" height="16" viewBox="0 0 16 16" fill="none" stroke="#555" strokeWidth="1.200"><circle cx="10" cy="6" r="5" /><path d="M6.500 9.500L1 15" /></svg>
);

const tabs = ['Файл', 'Главная', 'Вставка', 'Рисование', 'Конструктор', 'Макет', 'Ссылки', 'Рассылки', 'Рецензирование', 'Вид', 'Справка'];

const TitleBar = () => (
  <header className="flex h-12 items-center pl-4 text-[12px]">
    <div className="flex flex-[20] items-center">
      <svg width="16" height="16" viewBox="0 0 16 16">
        <path d="M4 0H15C15.600 0 16 .4 16 1V4H4Z" fill="#41a5ee" />
        <path d="M4 4H16V8H4Z" fill="#2b7cd3" /><path d="M4 8H16V12H4Z" fill="#185abd" />
        <path d="M4 12H16V15C16 15.600 15.600 16 15 16H5C4.400 16 4 15.600 4 15Z" fill="#103f91" />
        <rect y="3" width="10" height="10" rx="1" fill="#185abd" />
        <path d="M2 5.500L3.500 10.500L5 6L6.500 10.500L8 5.500" fill="none" stroke="#fff" strokeWidth="1.200" />
      </svg>
      <span className="ml-4 text-[11px]">Автосохранение</span>
      <button role="switch" aria-checked="false" aria-label="Автосохранение" className="ml-[6px] flex h-5 w-[42px] items-center rounded-full border border-neutral-600 bg-white pl-[2px]">
        <span className="size-[14px] rounded-full bg-neutral-600" />
      </button>
      <button aria-label="Сохранить" className="ml-3">
        <svg width="16" height="16" viewBox="0 0 16 16" fill="#d98be0" stroke="#8a2d93" strokeWidth="1.300"><path d="M1 1H15V15H3L1 13Z" /><path d="M4 1H12V7H4ZM5 15V10H11V15" fill="#fff" /></svg>
      </button>
      <button aria-label="Отменить" className="ml-[14px] flex items-center gap-1">
        <svg width="16" height="16" viewBox="0 0 16 16" fill="none" stroke="#999" strokeWidth="1.200"><path d="M1.500 1V7H7.500M1.500 7C4 3 9 1 12 4C15 7 13 10 7 15.500" /></svg>
        <ChevronDown size={9} className="text-neutral-400" />
      </button>
      <button aria-label="Повторить" className="ml-2">
        <svg width="18" height="16" viewBox="0 0 18 16" fill="none" stroke="#999" strokeWidth="1.200"><path d="M4 2H1.500M4 1V5M4 2C0 5 1 14 9 15C17 15 19 5 13 2" /></svg>
      </button>
      <button aria-label="Настройка панели" className="ml-4 flex flex-col items-center"><span className="h-px w-2 bg-neutral-700" /><ChevronDown size={9} strokeWidth={2.500} /></button>
      <button className="ml-6 flex items-center gap-1 whitespace-pre">Золотник_комплект  -  режим совместимости • Сохранено<ChevronDown size={13} strokeWidth={1.500} /></button>
    </div>
    <label className="flex h-8 w-[368px] items-center gap-4 rounded border border-[#d0d0d0] bg-[#fafafa] px-4 shadow-sm">
      <Lens />
      <input aria-label="Поиск" placeholder="Поиск" className="flex-1 bg-transparent text-[12px] outline-none placeholder:text-neutral-600" />
    </label>
    <div className="flex flex-[19] items-center justify-end">
      <button className="h-[19px] w-12 bg-[#242424] text-[11px] text-white">Вход</button>
      <button aria-label="Свернуть" className="flex w-[68px] justify-center"><Minus size={13} strokeWidth={1.500} /></button>
      <button aria-label="Восстановить" className="flex w-7 justify-center"><svg width="11" height="11" viewBox="0 0 11 11" fill="none" stroke="#222"><rect x="0.500" y="2.500" width="7" height="8" rx="1" /><path d="M3 0.500H8C9.500 .5 10.500 1 10.500 2.500V8" /></svg></button>
      <button aria-label="Закрыть" className="flex w-[58px] justify-center pl-[10px]"><X size={14} strokeWidth={1.300} /></button>
    </div>
  </header>
);

const HorizontalRuler = () => (
  <div className="flex h-6 shrink-0 border-b border-[#d0d0d0]">
    <div className="flex w-6 items-center justify-center border-r border-[#d0d0d0]"><span className="size-[7px] border-b-2 border-l-2 border-neutral-600" /></div>
    <div className="relative my-1 ml-[55px] flex w-[415px] bg-white pl-4 text-[9px] leading-[14px] text-neutral-700">
      {[2, 4, 6, 8, 10, 12, 14, 16, 18, 20, 22, 24, 26].map((n) => <span key={n} className="w-[30px] text-center">{n}</span>)}
      <svg className="absolute top-[-2px] left-[-6px]" width="12" height="22" viewBox="0 0 12 22" fill="#fff" stroke="#888">
        <path d="M0.500 0.500H11.500V4L6 9L0.500 4ZM6 9L11.500 13V15.500H0.500V13ZM0.500 15.500H11.500V20.500H0.500Z" />
      </svg>
      <svg className="absolute top-[6px] right-[-6px]" width="12" height="9" viewBox="0 0 12 9" fill="#fff" stroke="#888"><path d="M6 0.500L11.500 5V8.500H0.500V5Z" /></svg>
    </div>
  </div>
);

const App = () => (
  <div className="flex h-screen flex-col overflow-hidden bg-[#efefef] font-[Open_Sans,Noto_Sans,sans-serif] text-neutral-900">
    <Squiggle />
    <TitleBar />
    <nav className="flex h-[30px] items-start pr-3 pl-[5px] text-[12px]">
      {tabs.map((t) => (
        <a key={t} href="#" className={twMerge('mt-1 pr-3 pl-[11px] leading-6 whitespace-nowrap', t === 'Главная' && 'pr-[11px] pl-[10px] font-bold')}>
          <span className={t === 'Главная' ? 'block border-b-2 border-[#2b579a] leading-[22px]' : 'block'}>{t}</span>
        </a>
      ))}
      <button className="mt-[3px] ml-auto flex h-6 items-center gap-1 rounded bg-[#185abd] pr-1 pl-[5px] text-[12px] whitespace-nowrap text-white">
        <svg width="12" height="12" viewBox="0 0 12 12" fill="none" stroke="#fff"><path d="M4 3.500H1.500V11.500H10.500V8M3.500 8C4 5 6 4 9 4M7 1L10.500 4L7 7" /></svg>
        Общий доступ
        <ChevronDown size={9} strokeWidth={2.500} />
      </button>
    </nav>
    <div className="mx-2 flex h-[100px] shrink-0 rounded-t-lg bg-white shadow-sm">
      <Clipboard />
      <FontGroup />
      <Paragraph />
      <Styles />
      <Group title="Редактирование" className="w-[113px]">
        <div className="flex flex-col items-start pl-[13px] text-[12px]">
          <button className="flex h-6 items-center gap-1"><Lens />Найти<span className="ml-1"><Caret /></span></button>
          <button className="flex h-7 items-center gap-1">
            <svg width="16" height="18" viewBox="0 0 16 18" fill="none">
              <text x="5" y="9" fontSize="10" fill="#a33bb0" className="font-[Liberation_Sans,sans-serif]">b</text>
              <text x="9" y="16" fontSize="10" fill="#2484c6" className="font-[Liberation_Sans,sans-serif]">c</text>
              <path d="M2 5C0 8 1 11 6 13M3.500 14.500L6 13L5 10" stroke="#2484c6" />
            </svg>
            Заменить
          </button>
          <button className="flex h-6 items-center gap-1">
            <svg width="16" height="16" viewBox="0 0 16 16" fill="#fff" stroke="#444"><path d="M3.500 0.500V13L6.500 10.500L8.500 15L10.500 14L8.500 9.500H12Z" /></svg>
            Выделить<Caret />
          </button>
        </div>
      </Group>
      <Group title="Надстройки" className="w-[87px]">
        <button disabled className="flex w-full flex-col items-center pt-1 text-[12px] text-neutral-400">
          <svg width="28" height="28" viewBox="0 0 28 28" fill="none" stroke="#999"><path d="M.5 .5H27.500V27.500H.5ZM3.500 3.500H12.500V12.500H3.500ZM15.500 3.500H24.500V12.500H15.500ZM3.500 15.500H12.500V24.500H3.500ZM15.500 15.500H24.500V24.500H15.500Z" /></svg>
          <span className="mt-1">Надстройки</span>
        </button>
      </Group>
      <div className="flex w-[132px] items-end justify-end pr-2 pb-2"><button aria-label="Свернуть ленту"><ChevronDown size={13} /></button></div>
    </div>
    <HorizontalRuler />
    <main className="flex min-h-0 flex-1">
      <div className="w-6 shrink-0 border-r border-[#d0d0d0] pt-[21px] pl-1">
        <div className="flex h-[288px] w-[13px] flex-col bg-white pt-[14px] text-[9px] leading-[13px] text-neutral-700">
          {[2, 4, 6, 8, 10, 12, 14, 16, 18].map((n) => <span key={n} className="h-[30px] rotate-180 text-center [writing-mode:vertical-rl]">{n}</span>)}
        </div>
      </div>
      <div className="flex min-w-0 flex-1 flex-wrap content-start justify-center gap-[6px] overflow-hidden pt-[6px] pr-px">
        <Title />
        <RouteCard />
        <OperationCard op={operations[0]} />
        <SketchCard page="3" code="2014200001" no="005"><Sketch1 /></SketchCard>
        <div className="relative">
          <OperationCard op={operations[1]} />
          <TableHandles />
        </div>
        <SketchCard page="5" code="2014200002" no="010"><Sketch2 /></SketchCard>
        <OperationCard op={operations[2]} />
        <SketchCard page="7" code="2014200003" no="015"><Sketch3 /></SketchCard>
        <OperationCard op={operations[3]} />
        <SketchCard page="9" code="2014200004" no="020"><Sketch4 /></SketchCard>
        <OperationCard op={operations[4]} />
        <SketchCard page="11" code="2014200005" no="025"><Sketch5 /></SketchCard>
      </div>
      <div className="flex w-[17px] flex-col items-center justify-between bg-[#f3f3f3] py-[6px]">
        <div className="flex flex-col items-center gap-1">
          <svg width="9" height="7" viewBox="0 0 9 7" fill="#666"><path d="M4.500 0L9 7H0Z" /></svg>
          <span className="h-[496px] w-[9px] rounded-full bg-[#707070]" />
        </div>
        <svg width="9" height="7" viewBox="0 0 9 7" fill="#666"><path d="M4.500 7L9 0H0Z" /></svg>
      </div>
    </main>
    <footer className="flex h-[22px] shrink-0 items-center justify-between bg-[#f3f3f3] pr-[14px] pl-[11px] text-[11px]">
      <span>приблизительное число знаков Золотник_комплект: 10 528.</span>
      <div className="flex h-full items-center">
        <button className="flex items-center gap-[2px]">
          <svg width="15" height="14" viewBox="0 0 15 14" fill="none" stroke="#333"><path d="M3 .5H.5V13.500H3M12 .5H14.500M14.500 13.500H12M4.500 2.500H8.500L11.500 5.500V11.500H4.500ZM8.500 2.500V5.500H11.500" /></svg>
          Фокусировка
        </button>
        <button aria-label="Режим чтения" className="ml-[9px] flex w-[42px] justify-center"><svg width="15" height="13" viewBox="0 0 15 13" fill="none" stroke="#333"><path d="M.5 1.500H7V11.500H.5ZM8 1.500H14.500V11.500H8ZM2 4H5.500M2 6.500H5.500M2 9H5.500M9.500 4H13M9.500 6.500H13M9.500 9H13" /></svg></button>
        <button aria-label="Разметка страницы" className="flex h-full w-10 items-center justify-center bg-[#dcdcdc]"><svg width="12" height="14" viewBox="0 0 12 14" fill="none" stroke="#222"><path d="M.5 .5H11.500V13.500H.5ZM2.500 3.500H9.500M2.500 5.500H9.500M2.500 8H9.500M2.500 10.500H9.500" /></svg></button>
        <button aria-label="Веб-документ" className="flex w-10 justify-center"><svg width="14" height="14" viewBox="0 0 14 14" fill="none" stroke="#333"><path d="M6 12.500H.5V.5H11.500V5M2.500 3.500H9.500M2.500 6H6M2.500 8.500H5" /><circle cx="10" cy="10" r="3.500" /><path d="M6.500 10H13.500M10 6.500V13.500" /></svg></button>
        <button aria-label="Уменьшить" className="ml-[6px]"><Minus size={10} /></button>
        <input
          type="range" min="10" max="500" defaultValue="100" aria-label="Масштаб"
          className="mx-[3px] h-4 w-[101px] appearance-none bg-[linear-gradient(#777,#777),linear-gradient(#777,#777)] bg-[length:100%_1px,1px_7px] bg-center bg-no-repeat [&::-webkit-slider-thumb]:h-[11px] [&::-webkit-slider-thumb]:w-[5px] [&::-webkit-slider-thumb]:appearance-none [&::-webkit-slider-thumb]:bg-neutral-600"
        />
        <button aria-label="Увеличить"><Plus size={10} /></button>
        <span className="ml-[10px] w-[26px] text-right whitespace-nowrap">40 %</span>
      </div>
    </footer>
    <div className="flex h-2 shrink-0 items-end gap-[3px] overflow-hidden bg-linear-to-r from-[#1f333c] to-[#17233d] pl-[52px]">
      {['', '', 'ml-[46px]', '', '', ''].map((m, i) => (
        <span key={i} className={twMerge('h-[7px] w-[46px] border border-b-0 border-[#6b7b84] bg-[#3f525c]', m, i === 5 && 'border-[#aab5ba] bg-[#77858c]')} />
      ))}
      <span className="mr-[80px] ml-auto self-start pt-[3px] text-[11px] leading-none text-white">8:58</span>
    </div>
  </div>
);

export default App;
